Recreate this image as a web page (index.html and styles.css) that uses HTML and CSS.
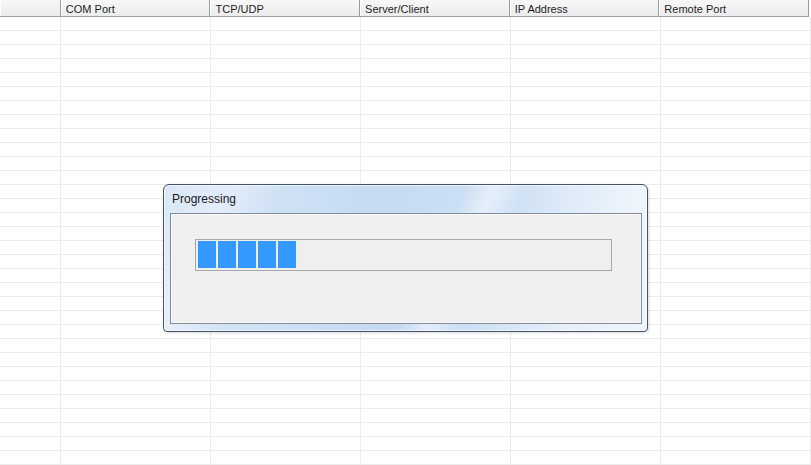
FILE: index.html
```html
<!DOCTYPE html>
<html>
<head>
    <meta charset="UTF-8">
    <title>Port List</title>
    <link rel="stylesheet" href="styles.css">
</head>
<body>
    <div class="grid">
      <div class="grid-header">
        <div class="col col-index"></div>
        <div class="col">COM Port</div>
        <div class="col">TCP/UDP</div>
        <div class="col">Server/Client</div>
        <div class="col">IP Address</div>
        <div class="col">Remote Port</div>
      </div>
      <div class="grid-body" id="rows"></div>
    </div>

    <div class="dialog">
      <div class="dialog-title">Progressing</div>
      <div class="dialog-panel">
        <div class="progress">
          <div class="block"></div>
          <div class="block"></div>
          <div class="block"></div>
          <div class="block"></div>
          <div class="block"></div>
        </div>
      </div>
    </div>

    <script>
        // Empty rows to fill the list
        const rows = document.getElementById('rows');
        for (let i = 0; i < 33; i++) {
          const row = document.createElement('div');
          row.className = 'grid-row';
          for (let c = 0; c < 6; c++) {
            const cell = document.createElement('div');
            cell.className = c === 0 ? 'cell col-index' : 'cell';
            row.appendChild(cell);
          }
          rows.appendChild(row);
        }
    </script>
</body>
</html>
```

FILE: styles.css
```css
body {
  margin: 0;
  background: #fff;
  font-family: "Liberation Sans", Arial, sans-serif;
  overflow: hidden;
}

.grid {
  width: 811px;
  height: 465px;
  overflow: hidden;
}

.grid-header {
  display: flex;
  height: 16px;
  border-bottom: 1px solid #a0a0a0;
  width: 809px;
  background: linear-gradient(#f7f7f7, #ececec);
}

.grid-header .col {
  width: 149px;
  border-right: 1px solid #9c9c9c;
  box-shadow: inset 1px 0 0 #fff;
  font-size: 11px;
  line-height: 18px;
  padding-left: 5px;
  box-sizing: content-box;
  color: #1e1e1e;
  white-space: nowrap;
}

.grid-header .col + .col {
  width: 144px;
}

.grid-header .col-index {
  width: 55px;
}

.grid-row {
  display: flex;
  height: 13px;
  border-bottom: 1px solid #ececec;
}

.cell {
  width: 149px;
  border-right: 1px solid #ececec;
}

.cell.col-index {
  width: 60px;
}

.dialog {
  position: absolute;
  left: 163px;
  top: 184px;
  width: 483px;
  height: 146px;
  border: 1px solid #43536a;
  border-radius: 6px 6px 4px 4px;
  background:
    linear-gradient(115deg, rgba(255,255,255,0) 0%, rgba(255,255,255,0.35) 12%, rgba(255,255,255,0) 22%, rgba(255,255,255,0) 55%, rgba(255,255,255,0.5) 60%, rgba(255,255,255,0) 66%, rgba(255,255,255,0.4) 85%),
    linear-gradient(90deg, #d9e7f7, #c5dbf2 45%, #d0e2f5 75%, #e3eefa);
  box-shadow: inset 0 0 0 1px rgba(255,255,255,0.6), 1px 1px 3px rgba(0,0,0,0.15);
}

.dialog-title {
  height: 28px;
  padding-left: 8px;
  font-size: 12px;
  line-height: 28px;
  color: #1a1a1a;
}

.dialog-panel {
  margin: 0 5px 0 6px;
  border: 1px solid #838c98;
  background: #f0f0f0;
  box-shadow: inset 0 0 0 1px #f8f8f8;
  padding: 25px 0 0 24px;
  box-sizing: border-box;
  height: 111px;
}

.progress {
  width: 413px;
  height: 29px;
  border: 1px solid #a7a7a7;
  background: #efefef;
  display: flex;
  gap: 2px;
  padding: 1px 0 0 2px;
}

.block {
  width: 18px;
  height: 27px;
  background: #3399ff;
}
```
